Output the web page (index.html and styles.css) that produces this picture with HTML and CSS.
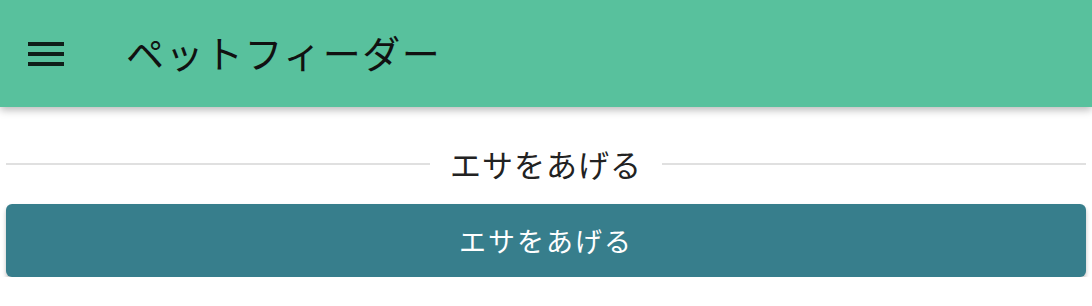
FILE: index.html
```html
<!DOCTYPE html>
<html lang="ja">
<head>
<meta charset="utf-8">
<title>ペットフィーダー</title>
<link rel="stylesheet" href="styles.css">
</head>
<body>
<header class="app-bar">
  <button class="menu-btn" aria-label="menu">
    <svg viewBox="0 0 24 24" width="48" height="48"><path d="M3 18h18v-2H3v2zm0-5h18v-2H3v2zm0-7v2h18V6H3z" fill="#0f1f19"/></svg>
  </button>
  <h1 class="app-title">ペットフィーダー</h1>
</header>
<main class="content">
  <div class="divider"><span class="divider-text">エサをあげる</span></div>
  <button class="feed-btn">エサをあげる</button>
</main>
</body>
</html>
```
FILE: styles.css
```css
* { box-sizing: border-box; }
body {
  margin: 0;
  font-family: "Noto Sans CJK JP", "Noto Sans", sans-serif;
  background: #fff;
}
.app-bar {
  height: 107px;
  background: #58c19d;
  display: flex;
  align-items: center;
  box-shadow: 0 3px 8px rgba(0,0,0,0.28);
  position: relative;
  z-index: 1;
}
.menu-btn {
  margin-left: 22px;
  width: 48px;
  height: 48px;
  padding: 0;
  border: 0;
  background: none;
  display: flex;
}
.app-title {
  margin: 0 0 4px 56px;
  font-size: 38px;
  font-weight: 400;
  letter-spacing: 1.5px;
  color: #111;
}
.content {
  padding: 34px 6px 0;
}
.divider {
  display: flex;
  align-items: center;
  gap: 20px;
}
.divider::before, .divider::after {
  content: "";
  flex: 1;
  height: 2px;
  background: #e0e0e0;
}
.divider-text {
  font-size: 31px;
  color: #222;
  letter-spacing: 1px;
}
.feed-btn {
  margin-top: 18px;
  width: 100%;
  height: 73px;
  border: 0;
  border-radius: 6px;
  background: #377e8c;
  color: #fff;
  font-family: inherit;
  font-size: 27px;
  letter-spacing: 2px;
  box-shadow: 0 3px 4px rgba(0,0,0,0.25);
}
```
